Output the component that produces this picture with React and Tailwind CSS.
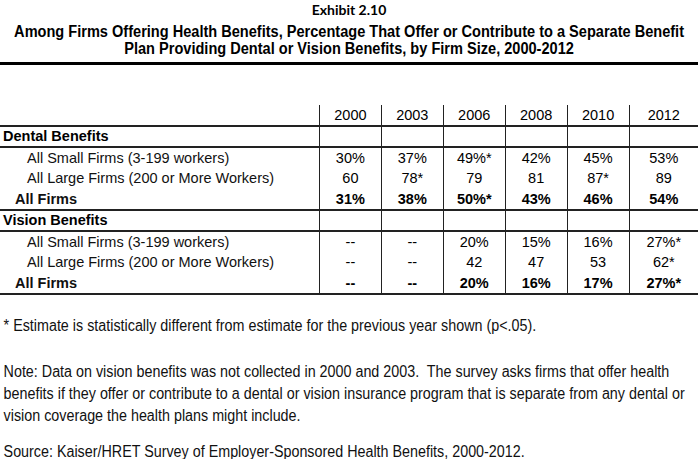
const YEARS = ['2000', '2003', '2006', '2008', '2010', '2012'];

const SECTIONS = [
  {
    title: 'Dental Benefits',
    rows: [
      { label: 'All Small Firms (3-199 workers)', values: ['30%', '37%', '49%*', '42%', '45%', '53%'] },
      { label: 'All Large Firms (200 or More Workers)', values: ['60', '78*', '79', '81', '87*', '89'] },
      { label: 'All Firms', values: ['31%', '38%', '50%*', '43%', '46%', '54%'], bold: true },
    ],
  },
  {
    title: 'Vision Benefits',
    rows: [
      { label: 'All Small Firms (3-199 workers)', values: ['--', '--', '20%', '15%', '16%', '27%*'] },
      { label: 'All Large Firms (200 or More Workers)', values: ['--', '--', '42', '47', '53', '62*'] },
      { label: 'All Firms', values: ['--', '--', '20%', '16%', '17%', '27%*'], bold: true },
    ],
  },
];

// no Arial Narrow here: squeeze Liberation Sans horizontally instead
const sans = "font-['Liberation_Sans',Arial,sans-serif]";

export default function App() {
  return (
    <div className="w-[698px] h-[459px] bg-white text-black overflow-hidden">
      {/* heading */}
      <div className="text-center">
        <div className="font-['Lato','Liberation_Sans',sans-serif] font-bold text-[14px] leading-[20px]">
          Exhibit 2.10
        </div>
        <div className="flex justify-center">
          <div className={`${sans} font-bold text-[16px] leading-[17px] whitespace-nowrap scale-x-[0.91] mt-[3px]`}>
            Among Firms Offering Health Benefits, Percentage That Offer or Contribute to a Separate Benefit
            <br />
            Plan Providing Dental or Vision Benefits, by Firm Size, 2000-2012
          </div>
        </div>
      </div>
      <div className="h-[3px] bg-black mt-[5px]" />

      {/* table */}
      <table className={`mt-[40px] w-full border-collapse ${sans} text-[14.5px] leading-none`}>
        <colgroup>
          <col className="w-[320px]" />
          {YEARS.map(y => <col key={y} className={y === '2012' ? 'w-[69px]' : 'w-[62px]'} />)}
        </colgroup>
        <tbody>
          <tr className="h-[21px]">
            <td className="border-r border-[#222]" />
            {YEARS.map((y, i) => (
              <td key={y} className={`text-center p-0 ${i < 5 ? 'border-r border-[#222]' : ''}`}>{y}</td>
            ))}
          </tr>
          {SECTIONS.map(sec => (
            <Section key={sec.title} sec={sec} />
          ))}
        </tbody>
      </table>

      {/* notes */}
      <div className="w-[800px] origin-top-left scale-x-[0.895] pl-[4px]">
        <div className={`${sans} text-[16px] leading-[22px] text-[#111] whitespace-nowrap`}>
          <p className="mt-[20px]">* Estimate is statistically different from estimate for the previous year shown (p&lt;.05).</p>
          <p className="mt-[24px]">
            Note: Data on vision benefits was not collected in 2000 and 2003.&nbsp; The survey asks firms that offer health
            <br />
            benefits if they offer or contribute to a dental or vision insurance program that is separate from any dental or
            <br />
            vision coverage the health plans might include.
          </p>
          <p className="mt-[14px]">Source: Kaiser/HRET Survey of Employer-Sponsored Health Benefits, 2000-2012.</p>
        </div>
      </div>
    </div>
  );
}

function Section({ sec }) {
  return (
    <>
      <tr className="h-[21px] border-y-2 border-[#222]">
        <td className="font-bold pl-[3px] border-r border-[#222] p-0">{sec.title}</td>
        {YEARS.map((y, i) => (
          <td key={y} className={i < 5 ? 'border-r border-[#222]' : ''} />
        ))}
      </tr>
      {sec.rows.map((r, ri) => (
        <tr key={ri} className={`h-[21px] ${ri === 2 ? 'border-b-2 border-[#222]' : ''}`}>
          <td className={`border-r border-[#222] p-0 ${r.bold ? 'font-bold pl-[15px]' : 'pl-[27px]'} text-[#111]`}>
            {r.label}
          </td>
          {r.values.map((v, i) => (
            <td key={i} className={`text-center p-0 ${r.bold ? 'font-bold' : ''} ${i < 5 ? 'border-r border-[#222]' : ''}`}>
              {v}
            </td>
          ))}
        </tr>
      ))}
    </>
  );
}
